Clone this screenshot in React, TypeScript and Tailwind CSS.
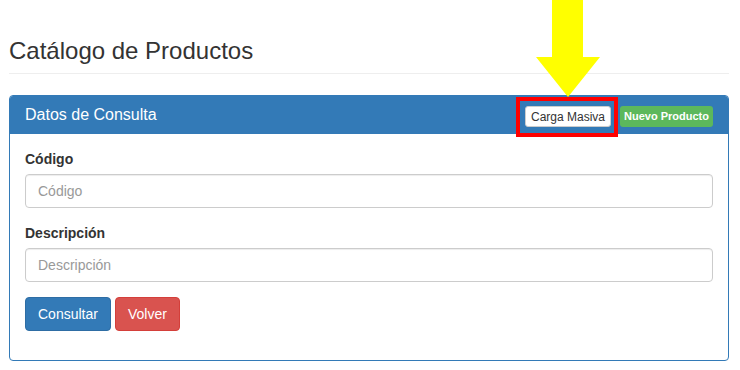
export default function App() {
  return (
    <div className="relative w-[740px] h-[370px] bg-white overflow-hidden text-[#333] font-['Liberation_Sans',Arial,sans-serif]">
      <div className="pl-[9px] pt-[38px] w-[729px]">
        <h3 className="text-[24px] leading-[26px] font-normal pb-[9px] border-b border-[#eee] mb-[21px]">
          Catálogo de Productos
        </h3>

        <div className="w-[720px] border border-[#337ab7] rounded-[4px] overflow-hidden">
          <div className="h-[38px] bg-[#337ab7] flex items-center justify-between px-[15px]">
            <span className="text-[16px] text-white">Datos de Consulta</span>
            <div className="flex items-center gap-[9px] mt-[3px]">
              <button className="h-[21px] px-[5px] bg-white border border-[#ccc] rounded-[3px] text-[12px] text-[#333] leading-none">
                Carga Masiva
              </button>
              <span className="h-[21px] px-[4px] flex items-center bg-[#5cb85c] rounded-[3px] text-[11px] font-bold text-white">
                Nuevo Producto
              </span>
            </div>
          </div>

          <div className="px-[15px] pt-[15px] pb-[29px]">
            <div className="mb-[15px]">
              <label className="block text-[14px] font-bold leading-[20px] mb-[5px]">Código</label>
              <input
                placeholder="Código"
                className="w-full h-[34px] px-[12px] text-[14px] border border-[#ccc] rounded-[4px] shadow-[inset_0_1px_1px_rgba(0,0,0,0.075)] placeholder:text-[#999] outline-none"
              />
            </div>
            <div className="mb-[15px]">
              <label className="block text-[14px] font-bold leading-[20px] mb-[5px]">Descripción</label>
              <input
                placeholder="Descripción"
                className="w-full h-[34px] px-[12px] text-[14px] border border-[#ccc] rounded-[4px] shadow-[inset_0_1px_1px_rgba(0,0,0,0.075)] placeholder:text-[#999] outline-none"
              />
            </div>
            <div className="flex gap-[4px]">
              <button className="h-[34px] px-[12px] bg-[#337ab7] border border-[#2e6da4] rounded-[4px] text-[14px] text-white">
                Consultar
              </button>
              <button className="h-[34px] px-[12px] bg-[#d9534f] border border-[#d43f3a] rounded-[4px] text-[14px] text-white">
                Volver
              </button>
            </div>
          </div>
        </div>
      </div>

      {/* annotation: arrow + highlight box */}
      <svg className="absolute left-[536px] top-0" width="64" height="97" viewBox="0 0 64 97">
        <polygon points="16,0 47,0 47,57 64,57 32,97 0,57 16,57" fill="#ffff00" />
      </svg>
      <div className="absolute left-[516px] top-[97px] w-[102px] h-[40px] border-4 border-[#ff0000]" />
    </div>
  );
}
